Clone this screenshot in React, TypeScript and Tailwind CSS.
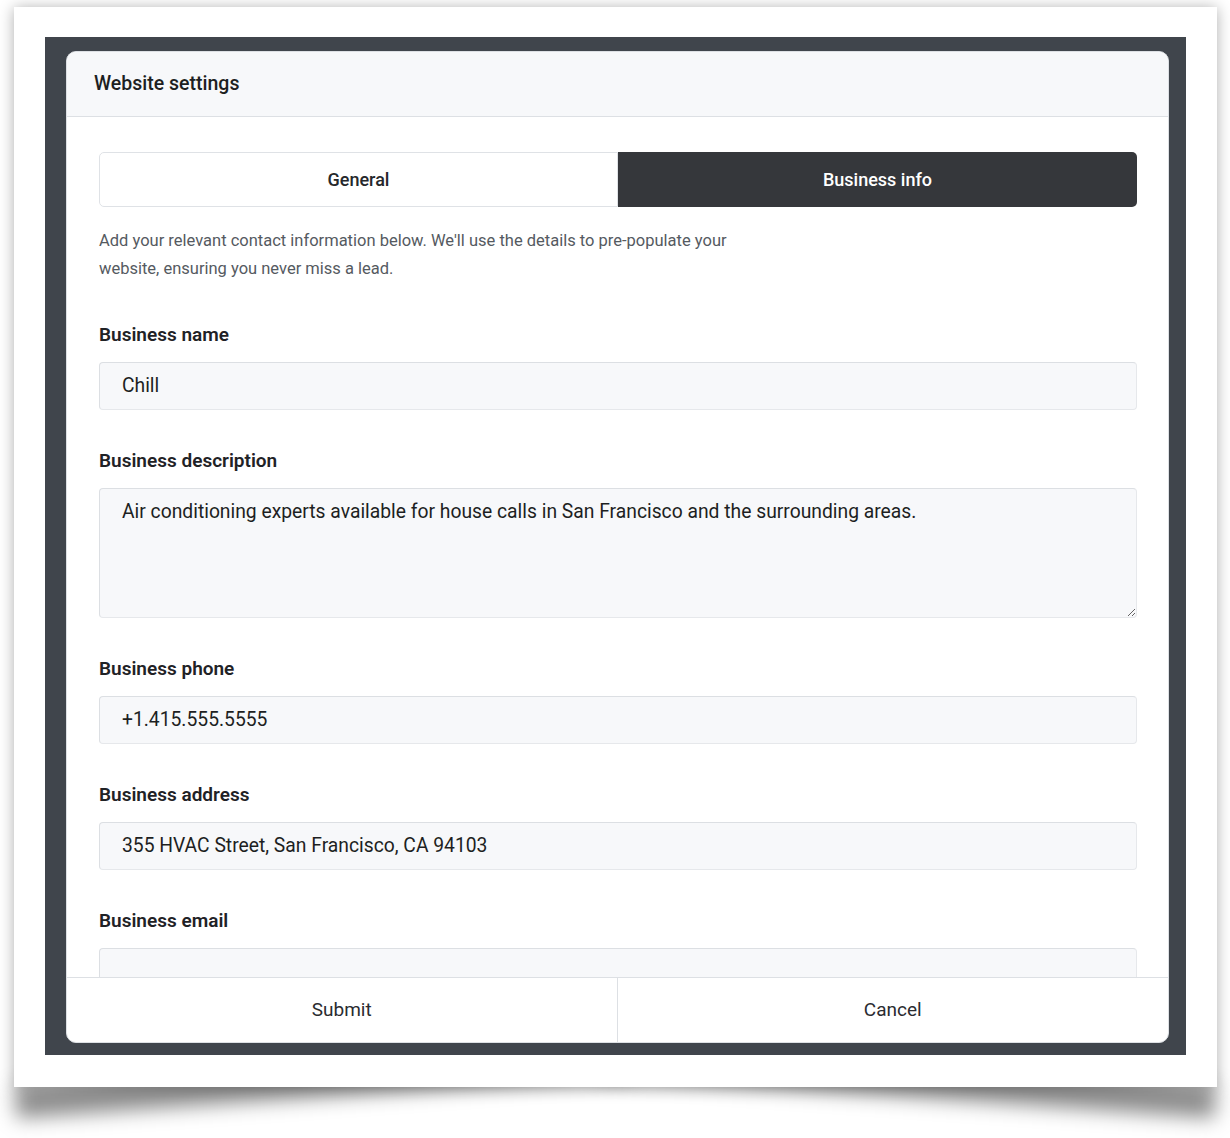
import type { ReactNode } from "react";

const inputClass =
  "mt-[15px] flex h-[48px] w-full items-center rounded-[4px] border border-[#e6e8eb] border-l-[#dcdfe3] border-t-[#dcdfe3] bg-[#f7f8fa] pl-[22px] pt-[1px] text-[19.3px] text-[#1d1f22]";

function Field({ label, children, first }: { label: string; children: ReactNode; first?: boolean }) {
  return (
    <div className={first ? "mt-[40px]" : "mt-[39px]"}>
      <div className="text-[19px] font-semibold leading-[24px] text-[#1f2226]">{label}</div>
      {children}
    </div>
  );
}

export default function App() {
  return (
    <div className="relative min-h-[1138px] w-[1230px] overflow-hidden bg-white font-['Roboto',sans-serif]">
      <div className="pl-[14px] pt-[7px]">
        <div className="relative w-[1203px]">
          {/* lifted-corner shadows under the frame */}
          <div className="absolute bottom-[12px] left-[0px] h-[32px] w-[620px] origin-right -rotate-[4deg] bg-black/45 blur-[10px]" />
          <div className="absolute bottom-[12px] right-[0px] h-[32px] w-[620px] origin-left rotate-[4deg] bg-black/45 blur-[10px]" />

          <div className="relative h-[1080px] bg-white px-[31px] pt-[30px] shadow-[0_1px_14px_rgba(0,0,0,0.32)]">
            <div className="h-[1018px] w-[1141px] bg-[#40454c] pl-[21px] pt-[14px]">
              <div className="flex h-[992px] w-[1103px] flex-col overflow-hidden rounded-[10px] border border-[#dde0e4] bg-white">
                <div className="flex h-[65px] shrink-0 items-center border-b border-[#dde0e4] bg-[#f7f8fa] pl-[27px] text-[19.5px] font-medium text-[#1d1f22]">
                  Website settings
                </div>

                <div className="min-h-0 flex-1 overflow-hidden pl-[32px] pr-[31px] pt-[35px]">
                  <div className="grid h-[55px] grid-cols-2 text-[18px] font-medium">
                    <div className="flex items-center justify-center rounded-l-[5px] border border-[#dfe2e6] bg-white text-[#26282c]">
                      General
                    </div>
                    <div className="flex items-center justify-center rounded-r-[5px] bg-[#35373b] text-white">
                      Business info
                    </div>
                  </div>

                  <p className="mt-[20px] max-w-[660px] text-[16.5px] leading-[28px] text-[#555a61]">
                    Add your relevant contact information below. We'll use the details to pre-populate your website,
                    ensuring you never miss a lead.
                  </p>

                  <Field label="Business name" first>
                    <div className={inputClass}>Chill</div>
                  </Field>

                  <Field label="Business description">
                    <textarea
                      className="mt-[15px] block h-[130px] w-full resize-y rounded-[4px] border border-[#e6e8eb] border-l-[#dcdfe3] border-t-[#dcdfe3] bg-[#f7f8fa] pl-[22px] pt-[10px] text-[19.3px] leading-[26px] text-[#1d1f22] outline-none"
                      defaultValue="Air conditioning experts available for house calls in San Francisco and the surrounding areas."
                    />
                  </Field>

                  <Field label="Business phone">
                    <div className={inputClass}>+1.415.555.5555</div>
                  </Field>

                  <Field label="Business address">
                    <div className={inputClass}>355 HVAC Street, San Francisco, CA 94103</div>
                  </Field>

                  <Field label="Business email">
                    <div className={inputClass} />
                  </Field>
                </div>

                <div className="grid h-[65px] shrink-0 grid-cols-2 border-t border-[#dde0e4] text-[19px] text-[#2a2c30]">
                  <div className="flex items-center justify-center border-r border-[#dde0e4]">Submit</div>
                  <div className="flex items-center justify-center">Cancel</div>
                </div>
              </div>
            </div>
          </div>
        </div>
      </div>
    </div>
  );
}
